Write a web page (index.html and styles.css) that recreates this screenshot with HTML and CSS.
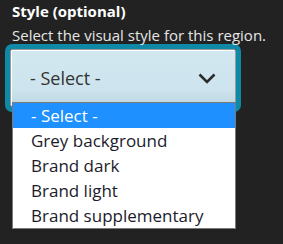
FILE: index.html
```html
<!DOCTYPE html>
<html lang="en">
<head>
    <meta charset="UTF-8">
    <title>Style (optional)</title>
    <link rel="stylesheet" href="styles.css">
</head>
<body>
    <div class="field">
        <div class="field-label">Style (optional)</div>
        <div class="field-desc">Select the visual style for this region.</div>

        <div class="select-ring">
            <div class="select-box">
                <span class="select-value">- Select -</span>
                <svg class="chevron" width="18" height="11" viewBox="0 0 18 11">
                    <path d="M1.5 1.5 L9 9 L16.5 1.5" fill="none" stroke="#2b2b2b" stroke-width="2.6"/>
                </svg>
            </div>
        </div>

        <!-- open dropdown list -->
        <ul class="options">
            <li class="selected">- Select -</li>
            <li>Grey background</li>
            <li>Brand dark</li>
            <li>Brand light</li>
            <li>Brand supplementary</li>
        </ul>
    </div>
</body>
</html>
```

FILE: styles.css
```css
html, body {
    height: 100%;
}
body {
    margin: 0;
    padding: 0;
    background-color: #222222;
    font-family: "Open Sans", "Noto Sans", sans-serif;
}
.field {
    position: relative;
    min-height: 244px;
    padding: 0 0 0 12px;
}
.field-label {
    color: #ffffff;
    font-weight: bold;
    font-size: 15px;
    line-height: 22px;
}
.field-desc {
    color: #e6e6e6;
    font-size: 15px;
    line-height: 22px;
    margin-top: 2px;
}
.select-ring {
    margin: -2px 0 0 -7px;
    width: 226px;
    border: 5px solid #0f89a5;
    border-radius: 7px;
}
.select-box {
    display: flex;
    align-items: center;
    justify-content: space-between;
    height: 56px;
    border: 1px solid #9a9a9a;
    border-radius: 2px;
    box-shadow: inset 1px 1px 0 #ffffff;
    background: linear-gradient(#d2e8f1, #cde4ee 70%, #bcd5df);
    padding: 0 19px 0 19px;
}
.select-value {
    color: #333333;
    font-size: 18px;
}
.chevron {
    display: block;
}
/* the open list lies over the select */
.options {
    position: absolute;
    z-index: 1;
    left: 12px;
    top: 102px;
    width: 222px;
    margin: 0;
    padding: 0;
    list-style: none;
    background-color: #ffffff;
    border: 1px solid #7a7a7a;
}
.options li {
    height: 25px;
    line-height: 25px;
    padding-left: 18px;
    font-size: 17px;
    color: #1b1b2b;
}
.options li.selected {
    background-color: #1e90ff;
    color: #ffffff;
}
```
